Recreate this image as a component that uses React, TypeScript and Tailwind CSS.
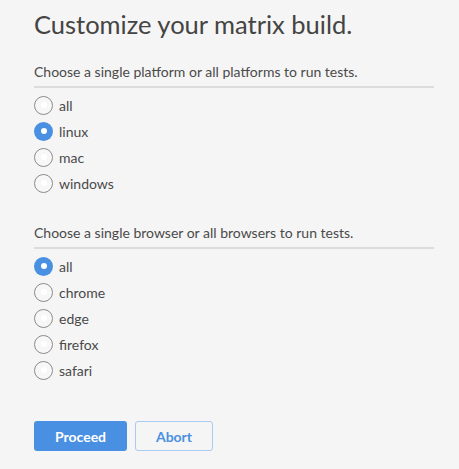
import React from "react";

function Radio({ label, checked }: { label: string; checked?: boolean }) {
  return (
    <label className="flex items-center h-[26px] gap-[6px] cursor-pointer">
      {checked ? (
        <span className="w-[19px] h-[19px] rounded-full bg-[#4a90e2] flex items-center justify-center">
          <span className="w-[6px] h-[6px] rounded-full bg-white" />
        </span>
      ) : (
        <span className="w-[19px] h-[19px] rounded-full border border-[#8a8a8a] bg-[#f7f7f7] flex items-center justify-center">
          <span className="w-[6px] h-[6px] rounded-full bg-white" />
        </span>
      )}
      <span className="text-[14px] text-[#4a4a4a]">{label}</span>
    </label>
  );
}

function Section({ title, options, selected }: { title: string; options: string[]; selected: string }) {
  return (
    <div>
      <p className="text-[14px] text-[#4a4a4a] leading-[20px]">{title}</p>
      <div className="h-[2px] bg-[#dcdcdc] mt-[4px] mb-[4px]" />
      <div className="flex flex-col">
        {options.map((o) => (
          <Radio key={o} label={o} checked={o === selected} />
        ))}
      </div>
    </div>
  );
}

export default function App() {
  return (
    <div
      className="w-[459px] h-[469px] bg-[#f5f5f5] pl-[34px] pr-[25px] pt-[8px]"
      style={{ fontFamily: "Lato, 'Open Sans', sans-serif" }}
    >
      <h1 className="text-[25.5px] text-[#444] leading-[32px]">Customize your matrix build.</h1>
      <div className="mt-[22px]">
        <Section
          title="Choose a single platform or all platforms to run tests."
          options={["all", "linux", "mac", "windows"]}
          selected="linux"
        />
      </div>
      <div className="mt-[27px]">
        <Section
          title="Choose a single browser or all browsers to run tests."
          options={["all", "chrome", "edge", "firefox", "safari"]}
          selected="all"
        />
      </div>
      <div className="flex gap-[8px] mt-[38px]">
        <button className="w-[93px] h-[30px] rounded-[3px] bg-[#4a90e2] text-white text-[14px] font-bold">
          Proceed
        </button>
        <button className="w-[78px] h-[30px] rounded-[3px] border border-[#a9cbf2] text-[#4a90e2] text-[14px] font-bold">
          Abort
        </button>
      </div>
    </div>
  );
}
